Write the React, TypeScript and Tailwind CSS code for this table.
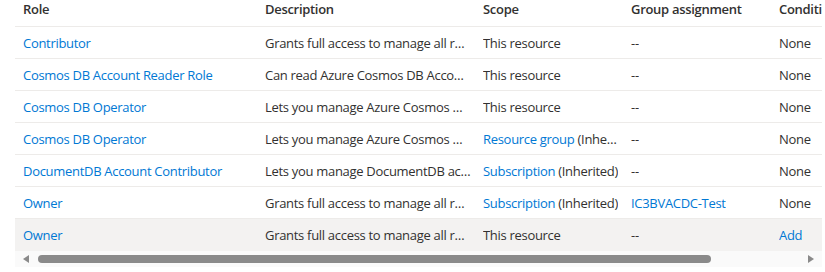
import React from 'react';

type Cell = { text: string; link?: boolean; suffix?: string };

type Row = {
  role: string;
  description: string;
  scope: Cell;
  group: Cell;
  condition: Cell;
  selected?: boolean;
};

const rows: Row[] = [
  {
    role: 'Contributor',
    description: 'Grants full access to manage all resources, but does not allow you to assign roles',
    scope: { text: 'This resource' },
    group: { text: '--' },
    condition: { text: 'None' },
  },
  {
    role: 'Cosmos DB Account Reader Role',
    description: 'Can read Azure Cosmos DB Account data.',
    scope: { text: 'This resource' },
    group: { text: '--' },
    condition: { text: 'None' },
  },
  {
    role: 'Cosmos DB Operator',
    description: 'Lets you manage Azure Cosmos DB accounts, but not access data in them.',
    scope: { text: 'This resource' },
    group: { text: '--' },
    condition: { text: 'None' },
  },
  {
    role: 'Cosmos DB Operator',
    description: 'Lets you manage Azure Cosmos DB accounts, but not access data in them.',
    scope: { text: 'Resource group', link: true, suffix: ' (Inherited)' },
    group: { text: '--' },
    condition: { text: 'None' },
  },
  {
    role: 'DocumentDB Account Contributor',
    description: 'Lets you manage DocumentDB accounts, but not access to them.',
    scope: { text: 'Subscription', link: true, suffix: ' (Inherited)' },
    group: { text: '--' },
    condition: { text: 'None' },
  },
  {
    role: 'Owner',
    description: 'Grants full access to manage all resources, including the ability to assign roles',
    scope: { text: 'Subscription', link: true, suffix: ' (Inherited)' },
    group: { text: 'IC3BVACDC-Test', link: true },
    condition: { text: 'None' },
  },
  {
    role: 'Owner',
    description: 'Grants full access to manage all resources, including the ability to assign roles',
    scope: { text: 'This resource' },
    group: { text: '--' },
    condition: { text: 'Add', link: true },
    selected: true,
  },
];

const cols = ['w-[242px]', 'w-[218px]', 'w-[148px]', 'w-[148px]', 'w-[160px]'];

const CellText: React.FC<{ cell: Cell }> = ({ cell }) => (
  <span className="truncate">
    <span className={cell.link ? 'text-[#0078d4]' : ''}>{cell.text}</span>
    {cell.suffix}
  </span>
);

const App: React.FC = () => {
  return (
    <div
      className="w-[825px] h-[272px] bg-white overflow-hidden pl-[15px] text-[13px] tracking-[-0.3px] text-[#323130]"
      style={{ fontFamily: '"Segoe UI", "Open Sans", "Noto Sans", sans-serif' }}
    >
      <div className="w-[807px] overflow-hidden">
        <div className="w-[916px]">
          {/* Header */}
          <div className="flex h-[27px] border-b border-[#edebe9] font-semibold leading-[18px]">
            {['Role', 'Description', 'Scope', 'Group assignment', 'Conditions'].map((h, i) => (
              <div key={h} className={`${cols[i]} shrink-0 pl-2 pr-1`}>
                {h}
              </div>
            ))}
          </div>

          {/* Rows */}
          {rows.map((row, idx) => (
            <div
              key={idx}
              className={`flex h-[32px] items-center pt-[2px] ${
                row.selected ? 'bg-[#f3f2f1]' : 'border-b border-[#edebe9]'
              }`}
            >
              <div className={`${cols[0]} shrink-0 pl-2 pr-1 truncate text-[#0078d4]`}>{row.role}</div>
              <div className={`${cols[1]} shrink-0 pl-2 pr-1 flex`}>
                <span className="truncate">{row.description}</span>
              </div>
              <div className={`${cols[2]} shrink-0 pl-2 pr-1 flex`}>
                <CellText cell={row.scope} />
              </div>
              <div className={`${cols[3]} shrink-0 pl-2 pr-1 flex`}>
                <CellText cell={row.group} />
              </div>
              <div className={`${cols[4]} shrink-0 pl-2 pr-1 flex`}>
                <CellText cell={row.condition} />
              </div>
            </div>
          ))}
        </div>

        {/* Horizontal scrollbar */}
        <div className="flex h-[16px] items-center bg-[#fafafa] px-[8px]">
          <svg width="7" height="8" viewBox="0 0 7 8" className="shrink-0">
            <path d="M6 0 L6 8 L0 4 Z" fill="#8a8a8a" />
          </svg>
          <div className="ml-[8px] h-[8px] w-[673px] rounded-full bg-[#8a8a8a]" />
          <div className="flex-1" />
          <svg width="7" height="8" viewBox="0 0 7 8" className="shrink-0">
            <path d="M1 0 L1 8 L7 4 Z" fill="#8a8a8a" />
          </svg>
        </div>
      </div>
    </div>
  );
};

export default App;
